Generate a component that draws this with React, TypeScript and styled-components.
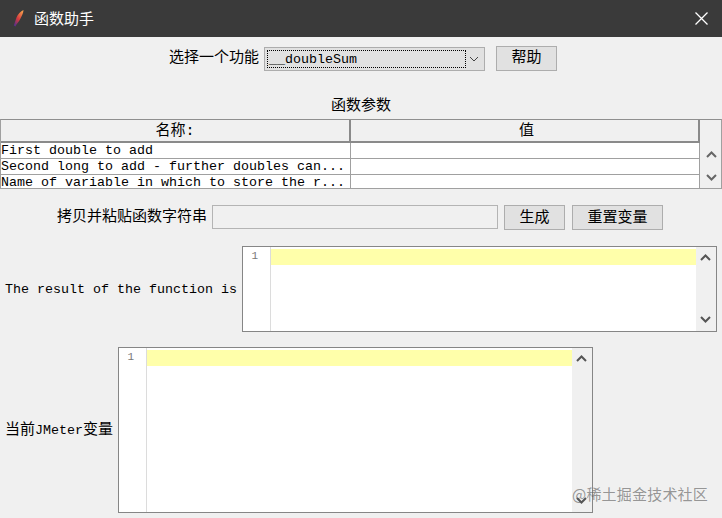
import React from "react";
import styled, { createGlobalStyle } from "styled-components";

const cjk = `"Liberation Mono", "Noto Sans CJK SC", monospace`;

const Global = createGlobalStyle`
  html, body { margin: 0; padding: 0; background: #f0f0f0; }
  * { box-sizing: border-box; }
`;

const Page = styled.div`
  position: relative;
  width: 722px;
  height: 518px;
  overflow: hidden;
  background: #f0f0f0;
  color: #000;
  font-family: ${cjk};
  font-size: 15px;
`;

const TitleBar = styled.header`
  height: 37px;
  background: #3a3a3a;
  color: #fff;
  display: flex;
  align-items: center;
  padding: 0 14px 0 13px;
  font-family: "Noto Sans CJK SC", sans-serif;
  font-size: 15px;
`;
const TitleText = styled.span`
  margin: 0 0 2px 10px;
  flex: 1;
`;

const Toolbar = styled.div`
  margin-top: 9px;
  height: 25px;
  display: flex;
  align-items: center;
  padding-left: 169px;
`;
const Label = styled.span`
  white-space: nowrap;
  line-height: 20px;
`;
const ToolLabel = styled(Label)`
  padding-top: 1px;
`;
const Latin = styled.span`
  font-size: 13.33px;
  font-weight: 400;
`;
const Select = styled.div`
  width: 221px;
  height: 24px;
  margin: 1px 11px 0 5px;
  border: 1px solid #adadad;
  background: #e1e1e1;
  display: flex;
  align-items: center;
  padding: 2px 5px 2px 2px;
`;
const SelectValue = styled.div`
  width: 199px;
  height: 18px;
  border: 1px dotted #000;
  font-size: 13.33px;
  line-height: 17px;
  padding-left: 1px;
`;
const SelectArrow = styled.div`
  flex: 1;
  display: flex;
  justify-content: flex-end;
  color: #444;
`;
const Button = styled.button<{ $w: number; $low?: boolean }>`
  width: ${(p) => p.$w}px;
  height: 25px;
  padding: ${(p) => (p.$low ? "2px 0 0" : "0")};
  border: 1px solid #adadad;
  background: #e1e1e1;
  color: #000;
  font-family: ${cjk};
  font-size: 15px;
  line-height: 20px;
`;

const Heading = styled.div`
  margin: 24px 0 0;
  height: 24px;
  line-height: 24px;
  text-align: center;
`;

const TableWrap = styled.div`
  height: 70px;
  display: flex;
  border-top: 1px solid #8f8f8f;
  border-bottom: 1px solid #a0a0a0;
  border-right: 1px solid #a0a0a0;
  border-left: 1px solid #a0a0a0;
`;
const Table = styled.div`
  flex: 1;
  background: #fff;
  display: grid;
  grid-template-columns: 350px 349px;
  grid-template-rows: 23px 16px 16px 14px;
`;
const HeadCell = styled.div<{ $shift?: number }>`
  background: #f0f0f0;
  border-right: 2px solid #8a8a8a;
  border-bottom: 2px solid #8a8a8a;
  text-align: center;
  line-height: 23px;
  padding-left: ${(p) => p.$shift ?? 0}px;
  overflow: hidden;
`;
const Cell = styled.div`
  border-right: 1px solid #a0a0a0;
  border-bottom: 1px solid #a0a0a0;
  font-size: 13.33px;
  line-height: 15px;
  white-space: nowrap;
  overflow: hidden;
  &:nth-last-child(-n + 2) { border-bottom: none; }
`;
const TableScroll = styled.div`
  width: 21px;
  display: flex;
  flex-direction: column;
  align-items: center;
  gap: 16px;
  padding: 31px 0 0 1px;
  color: #666;
`;

const FormRow = styled.div`
  margin-top: 16px;
  height: 25px;
  display: flex;
  align-items: center;
  padding-left: 57px;
`;
const TextInput = styled.div`
  width: 286px;
  height: 24px;
  margin: 0 6px 1px 5px;
  border: 1px solid #b4b4b4;
  background: #f0f0f0;
`;
const ButtonGap = styled.div`
  width: 7px;
`;

const EditorRow = styled.div<{ $top: number }>`
  margin-top: ${(p) => p.$top}px;
  display: flex;
  align-items: center;
  padding-left: 5px;
`;
const EditorLabel = styled(Label)<{ $w: number }>`
  width: ${(p) => p.$w}px;
  padding-top: 1px;
`;
const Editor = styled.div<{ $h: number }>`
  width: 475px;
  height: ${(p) => p.$h}px;
  border: 1px solid #868686;
  background: #fff;
  display: flex;
`;
const Gutter = styled.div`
  width: 28px;
  border-right: 1px solid #dcdcdc;
  text-align: right;
  padding: 1px 12px 0 0;
  font-size: 11px;
  line-height: 16px;
  color: #777;
  font-family: "Liberation Mono", monospace;
`;
const EditArea = styled.div`
  flex: 1;
  padding-top: 2px;
`;
const CurrentLine = styled.div`
  height: 16px;
  background: #ffffaa;
`;
const EditScroll = styled.div`
  width: 20px;
  background: #f0f0f0;
  display: flex;
  flex-direction: column;
  justify-content: space-between;
  align-items: center;
  padding: 7px 1px 8px 0;
  color: #555;
`;

const Watermark = styled.div`
  position: absolute;
  left: 572px;
  top: 484px;
  font-family: "Noto Sans CJK SC", sans-serif;
  font-size: 15px;
  letter-spacing: 0.2px;
  line-height: 20px;
  color: rgba(90, 90, 90, 0.62);
  white-space: nowrap;
`;

const Up = () => (
  <svg width="11" height="7" viewBox="0 0 11 7" fill="none" stroke="currentColor" strokeWidth="2">
    <path d="M1 6l4.500-4.500L10 6" />
  </svg>
);
const Down = () => (
  <svg width="11" height="7" viewBox="0 0 11 7" fill="none" stroke="currentColor" strokeWidth="2">
    <path d="M1 1l4.500 4.500L10 1" />
  </svg>
);
const Feather = () => (
  <svg width="11" height="17" viewBox="0 0 11 17">
    <defs>
      <linearGradient id="fh" x1="0.8" y1="0" x2="0.2" y2="1">
        <stop offset="0" stopColor="#f4a04c" />
        <stop offset="0.55" stopColor="#d63a3e" />
        <stop offset="1" stopColor="#56308a" />
      </linearGradient>
    </defs>
    <path d="M10.500 0C7.500 1.500 5 4 3.500 7.500L0.800 15.500L2.500 16.500C3.500 14 6 11.500 7.500 8.500C9 5.500 10.300 3 10.500 0Z" fill="url(#fh)" />
  </svg>
);
const Close = () => (
  <svg width="13" height="13" viewBox="0 0 13 13" stroke="#fff" strokeWidth="1.300">
    <path d="M0.500 0.500L12.500 12.500M12.500 0.500L0.500 12.500" />
  </svg>
);

const CodeEditor = ({ h }: { h: number }) => (
  <Editor $h={h}>
    <Gutter>1</Gutter>
    <EditArea>
      <CurrentLine />
    </EditArea>
    <EditScroll>
      <Up />
      <Down />
    </EditScroll>
  </Editor>
);

export default function App() {
  return (
    <Page>
      <Global />
      <TitleBar>
        <Feather />
        <TitleText>函数助手</TitleText>
        <Close />
      </TitleBar>
      <Toolbar>
        <ToolLabel>选择一个功能</ToolLabel>
        <Select>
          <SelectValue>__doubleSum</SelectValue>
          <SelectArrow>
            <svg width="10" height="6" viewBox="0 0 10 6" fill="none" stroke="currentColor" strokeWidth="1">
              <path d="M1 1l4 4 4-4" />
            </svg>
          </SelectArrow>
        </Select>
        <Button $w={61}>帮助</Button>
      </Toolbar>
      <Heading>函数参数</Heading>
      <TableWrap>
        <Table>
          <HeadCell>名称:</HeadCell>
          <HeadCell $shift={4}>值</HeadCell>
          <Cell>First double to add</Cell>
          <Cell />
          <Cell>Second long to add - further doubles can...</Cell>
          <Cell />
          <Cell>Name of variable in which to store the r...</Cell>
          <Cell />
        </Table>
        <TableScroll>
          <Up />
          <Down />
        </TableScroll>
      </TableWrap>
      <FormRow>
        <Label>拷贝并粘贴函数字符串</Label>
        <TextInput />
        <Button $w={61} $low>生成</Button>
        <ButtonGap />
        <Button $w={91} $low>重置变量</Button>
      </FormRow>
      <EditorRow $top={16}>
        <EditorLabel $w={237}>
          <Latin>The result of the function is</Latin>
        </EditorLabel>
        <CodeEditor h={86} />
      </EditorRow>
      <EditorRow $top={15}>
        <EditorLabel $w={113}>
          当前<Latin>JMeter</Latin>变量
        </EditorLabel>
        <CodeEditor h={166} />
      </EditorRow>
      <Watermark>@稀土掘金技术社区</Watermark>
    </Page>
  );
}
